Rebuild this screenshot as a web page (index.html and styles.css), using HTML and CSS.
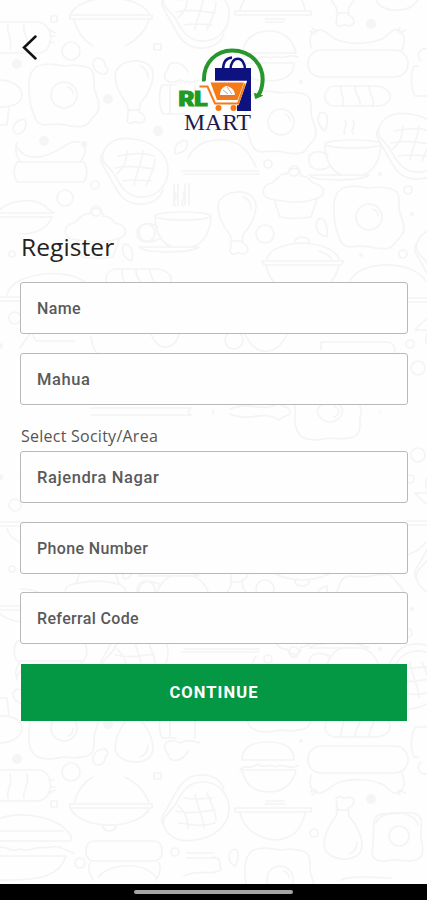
FILE: index.html
```html
<!DOCTYPE html>
<html lang="en">

<head>
    <meta charset="UTF-8">
    <meta name="viewport" content="width=device-width, initial-scale=1.0">
    <title>Register</title>
    <link rel="stylesheet" href="styles.css">
</head>

<body>
    <div class="screen">
        <!-- food doodles behind the form -->
        <svg class="doodles" viewBox="0 0 427 884" aria-hidden="true">
            <defs>
                <clipPath id="half">
                    <rect y="-60" width="427" height="471.5" />
                </clipPath>
                <g id="egg">
                    <path d="M12 2C21-1 27 3 35 3c10-2 16 0 22 1c8 3 7 10 7 18c0 8 5 13 5 21c0 8-6 10-9 15c-4 7-12 6-20 5c-9-3-17-2-26-1c-8-1-9-7-11-13c-4-8-3-14-4-23C-2 16 1 3 12 2z" />
                    <circle cx="34" cy="32" r="13" />
                    <path d="M38 24q5 2 5 7" />
                </g>
                <g id="leg">
                    <path d="M14 50L12 43C5 34 0 25 0 14C1-3 37-6 38 13c0 12-6 21-13 30l-1 8c7 2 8 10 1 11c-3 0-3-2-6-1c-4 3-9 0-6-5c-1-3 0-5 1-6z" />
                    <path d="M12 49h13M25 5c6 2 8 6 8 12" />
                </g>
                <g id="steak">
                    <path d="M3 15C8 2 20-1 34 1c18 2 33 14 34 29c1 15-9 28-24 29c-17 1-23-10-30-23C9 28 0 25 3 15z" />
                    <path d="M3 15c-6 7 1 13 5 21C18 55 23 67 43 66c11-1 17-6 20-14M18 18c14-2 24-4 36 0M15 30c15-3 25-1 39 1M23 43c10-2 18-1 28 0M27 13c-1 12-3 16-10 23M43 13c-1 12-7 22-9 34M55 21c0 8-6 20-9 27" />
                </g>
                <g id="sausage">
                    <rect y="22" width="100" height="27" rx="13" />
                    <path d="M3 20C1 10 2 2 12 2c8 1 10 8 20 11c14 4 31 3 44-3C83 3 88-2 94 5c4 6 2 11 0 17M2 3L7 6M4 0l5 4M92 0l-2 4M97 2l-5 3" />
                </g>
                <g id="pot">
                    <path d="M4 18C7 5 22 1 40 0c19 1 34 6 38 18M0 18h82l-3 4H2zM4 22c3 17 17 29 36 29s34-12 37-29M33 0c-2-8 16-8 14 0M57 8q9 3 13 8" />
                </g>
                <g id="cup">
                    <ellipse cx="28" cy="4" rx="28" ry="4" />
                    <path d="M0 4c0 14 5 27 17 31h20C50 31 55 18 56 5M3 15C-8 8-17 13-16 21c1 9 11 11 20 6M-16 35h60c-8 6-54 7-60 0zM20-6c-4-5 4-6 0-14M28-6c-4-5 4-6 0-14" />
                </g>
                <g id="muffin">
                    <path d="M8 24C-3 22-2 10 9 8C14 5 16-2 24-1C29-10 38-7 38 1c8 0 10 5 12 7c12 2 15 13 2 16c-14 5-30 3-44 0zM11 24l6 18c11 2 21 2 31 0l6-18" />
                    <circle cx="31" cy="-4" r="5" />
                </g>
                <g id="burger">
                    <path d="M0 22C3 7 13 0 27 0s24 8 27 22zM-2 22c5 7 10-1 17 6c7-6 12 2 18-3c7 5 12-3 23 1M0 32h52c0 12-9 18-26 18S0 44 0 32z" />
                </g>
                <g id="bread">
                    <path d="M8 0h42c17 1 19 17 4 20H7C-4 18-4 2 8 0zM15 1c-1 8 4 9 2 18M29 1c-1 8 6 9 5 18M43 1c0 8 6 9 4 18" />
                </g>
                <g id="doodleHalf">
                    <use href="#egg" x="30" y="63" />
                    <use href="#egg" x="247" y="90" />
                    <use href="#egg" x="335" y="185" />
                    <use href="#egg" x="296" y="382" />
                    <use href="#leg" x="115" y="61" />
                    <use href="#leg" x="218" y="192" />
                    <use href="#leg" x="324" y="-36" />
                    <use href="#steak" x="100" y="138" />
                    <use href="#steak" x="161" y="-18" />
                    <use href="#steak" x="376" y="113" />
                    <use href="#steak" x="414" y="228" />
                    <use href="#sausage" x="308" y="28" />
                    <path d="M17 147c7 13 25 14 46 0M17 143c-3 8 0 14 3 18M84 143c3 8 0 14-3 18M17 162h67q6 10 0 20H17q-6-10 0-20zM63 147q9-7 17-5" />
                    <use href="#pot" x="262" y="243" />
                    <path d="M70 15C76 3 93-2 109-2s35 5 41 17zM70 15v4h82v-4M74 20c3 11 8 20 19 26M149 20c-4 12-12 20-24 26M103-2c-1-8 14-8 13 0" />
                    <use href="#cup" x="155" y="212" />
                    <use href="#cup" x="325" y="140" />
                    <use href="#muffin" x="65" y="215" />
                    <use href="#muffin" x="263" y="175" />
                    <use href="#burger" x="242" y="31" />
                    <use href="#bread" x="326" y="86" />
                    <use href="#bread" x="107" y="269" />
                    <path d="M-4 22h42c16 2 17 28 2 31H-4M8 25c-2 9 5 12 2 24M24 25c-2 9 6 12 3 24M50 30l5 3M50 36h5M49 42l5 1" />
                    <path d="M-4 214C5 200 36 195 48 209l6 4H-2M0 217h52c-5 12-17 17-32 17M7 295c3-24 78-32 85-2M0 297h24M0 301h24" />
                    <path d="M-3 81c10-3 25 4 25 14c0 10-14 13-25 12M9 107l-2 18H-2" />
                    <path d="M188 158c7-14 20-19 35-18c18 1 26 12 33 27M182 171h77M184 174h75M235 11h76v4h-76zM240 10C244-6 258-16 276-17c16 1 26 11 29 27M265 19h20M266 22h18M376 0c6 15 39 13 42-2" />
                    <path d="M350 281c9-20 60-23 76 0M407 298h20M407 302h20M415 330q10-12 16-12M415 330h14q-7 12 0 16" />
                    <path d="M188 72c-6-12-20-12-20-3c-9 9 1 18 12 11c9 4 13 2 20 0M176 85h-14c-4 8-3 22 1 29h24M170 85v28M195 85v18M418 66h-4c-4 8-3 22 1 30h14M427 49c-9-1-11 8-6 12" />
                    <path d="M174 184v21M178 184v21M185 184v21M189 184v21" />
                    <path d="M95 59c5-3 11 2 10 7c5 2 2 9-2 8c-8-1-13-9-8-15zM13 130c0-8 8-12 12-10c3 8-2 14-9 14zM175 151c0-8 8-12 12-10c2 8-4 12-12 13zM320 113c7-3 10 6 5 18c-8-5-8-13-5-18zM318 219c7-3 10 6 9 18c-10-2-13-10-9-18zM124 244c7 0 11 9 7 17c-7-3-10-9-7-17z" />
                    <path d="M20 348l11-16l5 9h38M23 362l6 10M91 337c2 14 7 19 12 21M151 334c7 18 24 17 28 0M245 334c11 24 32 22 42 0M321 350v-8h65c8 0 9 5 9 11M91 408h100l-16 18M95 414h88M230 409c20-9 32 5 49-6c8 8 13 0 10 16M231 421h57c-4 21-49 26-57 0M213 410c7 14 10 23 7 40M380 411c-6 5-4 22 2 26c14 6 30 5 48 2" />
                    <circle cx="71" cy="51" r="9" />
                    <circle cx="65" cy="198" r="8" />
                    <circle cx="146" cy="233" r="9" />
                    <circle cx="265" cy="234" r="9" />
                    <circle cx="234" cy="340" r="9" />
                    <circle cx="418" cy="368" r="7" />
                    <circle cx="15" cy="318" r="6" />
                    <circle cx="95" cy="185" r="4" />
                    <circle cx="12" cy="254" r="3" />
                    <circle cx="408" cy="190" r="4" />
                    <circle cx="403" cy="254" r="4" />
                    <circle cx="410" cy="344" r="4" />
                    <circle cx="268" cy="164" r="4" />
                    <rect x="154" y="44" width="7" height="6" />
                    <rect x="51" y="16" width="6" height="6" />
                    <g class="crumbs">
                        <circle cx="17" cy="64" r="5" />
                        <circle cx="108" cy="99" r="5" />
                        <circle cx="44" cy="141" r="5" />
                        <circle cx="158" cy="131" r="5" />
                        <circle cx="84" cy="144" r="3" />
                        <circle cx="371" cy="24" r="5" />
                        <circle cx="412" cy="214" r="2" />
                        <circle cx="361" cy="255" r="2" />
                        <circle cx="301" cy="82" r="2" />
                        <circle cx="380" cy="174" r="2" />
                        <circle cx="0" cy="346" r="3" />
                    </g>
                </g>
            </defs>
            <use href="#doodleHalf" clip-path="url(#half)" />
            <g transform="translate(0 823) scale(1 -1)">
                <use href="#doodleHalf" clip-path="url(#half)" />
            </g>
            <!-- last row above the system bar -->
            <path d="M-2 819c25-9 62-2 73 17q2 5-3 5H-2M-2 831h65M-2 848c8-4 12 6 22 1c9 4 18-4 27-1c11-4 15 1 27 5M-2 856h68c-6 19-22 25-68 24" />
            <rect x="86" y="841" width="76" height="20" rx="8" />
            <path d="M90 863c-3 7 0 12 3 17M98 877c14-15 46-15 58 0M159 863c3 7 0 12-3 17M187 853h27M187 858h27M184 876c10-6 20-2 30-4" />
            <path d="M374 822c2-10 10-8 18-8c10 0 18-4 26 1c6 6 2 12 3 20c0 8 4 14 0 22c-8 7-20 2-30 3c-12 3-19 0-19-9c2-10 1-18 2-29zM341 880c8-4 28-3 50-2" />
            <circle cx="399" cy="836" r="10" />
            <use href="#egg" x="246" y="847" />
            <circle cx="175" cy="852" r="4" />
            <circle cx="80" cy="863" r="5" />
            <circle cx="314" cy="833" r="4" />
            <path d="M232 850c6-3 9 4 3 16c-7-3-8-11-3-16zM213 857l6 2l2 11l-8 3" />
        </svg>

        <header class="header">
            <a class="back" href="#" aria-label="Back">
                <svg width="16" height="26" viewBox="0 0 16 26">
                    <path d="M13.500 2.500L2 13.500l11.500 11" />
                </svg>
            </a>
            <svg class="logo" width="92" height="96" viewBox="175 47 92 96">
                <!-- arrow round the bag -->
                <path class="ring" d="M204 81.500C203 62 217 50.500 232 50.500C252 50.500 264 66 262.500 82C262 88 260.500 92 258.500 95" />
                <path class="green" d="M254.500 93.500l8 2l-7 3z" />
                <!-- bag -->
                <path class="navy" d="M215 68h36v43h-14V82h-22z" />
                <path class="handle" d="M223 70c0-8 3-12 9-12.500M230.500 70c0-15 14.500-15 14.500 0" />
                <!-- cart -->
                <path class="cart-edge" d="M208 83h36l-7 20h-22z" />
                <path class="cart" d="M210.500 82.500h33.500l-6.500 17.500h-20.500z" />
                <path class="cart-line" d="M199.500 86.500h8l7.500 17h23l7-20" />
                <path class="food" d="M220 95c0-5 3-8.500 6.500-9c5 1 8 4 8.500 9z" />
                <path class="food-line" d="M223 90l5 4M227 87l5 7M219.500 96h16" />
                <circle class="wheel" cx="218.500" cy="108" r="3" />
                <circle class="wheel" cx="233.500" cy="108" r="3" />
                <text class="rl" x="178.500" y="105.500" textLength="29" lengthAdjust="spacingAndGlyphs">RL</text>
                <text class="mart" x="184" y="130" textLength="67" lengthAdjust="spacingAndGlyphs">MART</text>
            </svg>
        </header>

        <main class="form">
            <h1 class="title">Register</h1>
            <div class="field">Name</div>
            <div class="field filled">Mahua</div>
            <div class="area">
                <div class="label">Select Socity/Area</div>
                <div class="field filled">Rajendra Nagar</div>
            </div>
            <div class="field">Phone Number</div>
            <div class="field">Referral Code</div>
            <button class="continue" type="button">CONTINUE</button>
        </main>

        <div class="navbar">
            <div class="navbar-handle"></div>
        </div>
    </div>
</body>

</html>
```
FILE: styles.css
```css
* {
    box-sizing: border-box;
}

body {
    margin: 0;
    background: #fefefe;
    font-family: Roboto, "Liberation Sans", sans-serif;
}

.screen {
    position: relative;
    display: flex;
    flex-direction: column;
    width: 427px;
    height: 900px;
    overflow: hidden;
}

/* background */
.doodles {
    position: absolute;
    top: 0;
    left: 0;
    width: 427px;
    height: 884px;
    z-index: -1;
    fill: none;
    stroke: #f4f4f4;
    stroke-width: 1.7;
    stroke-linejoin: round;
    stroke-linecap: round;
}

.crumbs {
    fill: #f5f5f5;
    stroke: none;
}

/* header */
.header {
    display: flex;
    height: 230px;
    padding: 34px 0 0 22px;
}

.back {
    width: 16px;
    height: 26px;
}

.back svg {
    display: block;
    fill: none;
    stroke: #111;
    stroke-width: 2.5;
    stroke-linecap: round;
}

.logo {
    margin: 13px 0 0 137px;
    overflow: visible;
}

.ring {
    fill: none;
    stroke: #27962c;
    stroke-width: 4;
}

.green {
    fill: #27962c;
    stroke: #27962c;
}

.navy {
    fill: #0d1280;
}

.handle {
    fill: none;
    stroke: #0d1280;
    stroke-width: 2.5;
}

.cart-edge {
    fill: #fff;
    stroke: #fff;
    stroke-width: 4.5;
}

.cart,
.wheel {
    fill: #f57b17;
}

.cart-line {
    fill: none;
    stroke: #f57b17;
    stroke-width: 2;
}

.food {
    fill: #fff;
}

.food-line {
    fill: none;
    stroke: #b9806a;
    stroke-width: 0.7;
}

.rl {
    fill: #1f9a22;
    stroke: #1f9a22;
    stroke-width: 1.2;
    font-family: Roboto, sans-serif;
    font-size: 20.5px;
    font-weight: 900;
}

.mart {
    fill: #1d1b4d;
    font-family: "Liberation Serif", serif;
    font-size: 23px;
}

/* form */
.form {
    display: flex;
    flex-direction: column;
    flex: 1;
    gap: 18.6px;
    padding: 0 19px 0 20px;
}

.title {
    height: 34px;
    margin: 0 0 -0.6px 1px;
    font-family: "Open Sans", sans-serif;
    font-size: 24.5px;
    font-weight: 400;
    line-height: 33px;
    letter-spacing: 0.1px;
    color: #222;
}

.field {
    height: 52px;
    padding-left: 16px;
    border: 1px solid #b9b9b9;
    border-radius: 3px;
    background: #fefefe;
    font-size: 16px;
    font-weight: 500;
    line-height: 51px;
    letter-spacing: 0.35px;
    color: #5a5a5a;
}

.filled {
    font-size: 16.5px;
    letter-spacing: 0.6px;
}

.area {
    margin-top: 3px;
}

.label {
    height: 25px;
    padding-left: 1px;
    font-family: "Open Sans", sans-serif;
    font-size: 16px;
    line-height: 21px;
    letter-spacing: 0.25px;
    color: #555;
}

.continue {
    height: 57px;
    margin: 1px 1px 0;
    padding: 0;
    border: 0;
    background: #049844;
    font-family: inherit;
    font-size: 16.5px;
    font-weight: 700;
    letter-spacing: 1.1px;
    color: #fff;
}

/* system bar */
.navbar {
    display: flex;
    justify-content: center;
    height: 16px;
    padding-top: 6px;
    background: #000;
}

.navbar-handle {
    width: 159px;
    height: 4px;
    border-radius: 2px;
    background: #a5a5a5;
}
```
